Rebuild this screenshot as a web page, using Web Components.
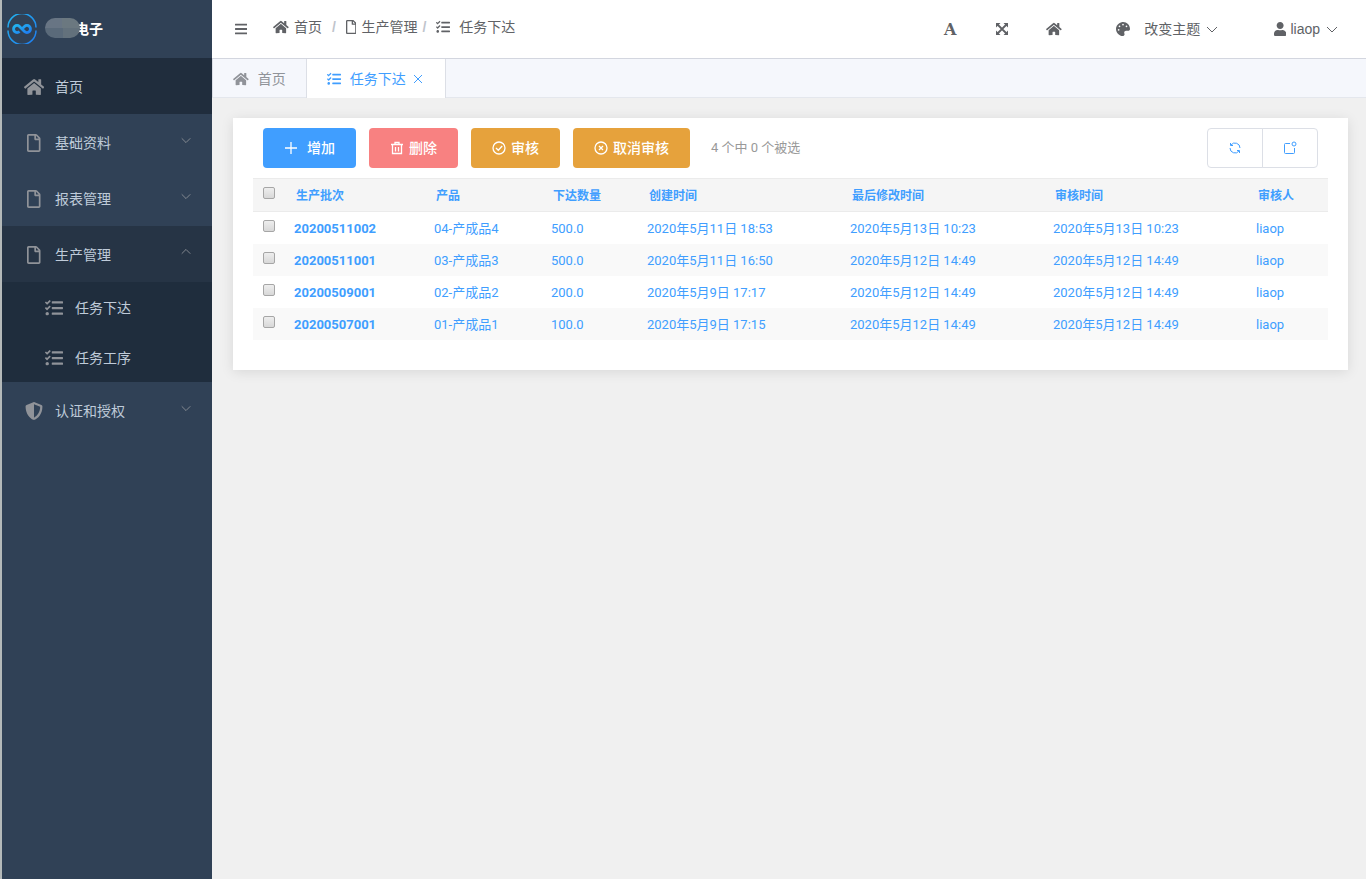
<!DOCTYPE html>
<html lang="zh-CN">
<head>
<meta charset="utf-8">
<title>任务下达</title>
<style>
    html, body {
        height: 100%;
        margin: 0;
    }

    body {
        font-family: "Liberation Sans", "Noto Sans CJK SC", sans-serif;
        font-size: 14px;
        line-height: 20px;
        color: #606266;
        background-color: #f0f0f0;
    }
</style>
</head>
<body>
<admin-app></admin-app>

<script>
// every icon: viewBox + svg content
const ICONS = {
    home: ['0 0 576 512', '<path d="M280.37 148.26L96 300.11V464a16 16 0 0 0 16 16l112.06-.29a16 16 0 0 0 15.92-16V368a16 16 0 0 1 16-16h64a16 16 0 0 1 16 16v95.64a16 16 0 0 0 16 16.05L464 480a16 16 0 0 0 16-16V300L295.67 148.26a12.19 12.19 0 0 0-15.3 0zM571.6 251.47L488 182.56V44.05a12 12 0 0 0-12-12h-56a12 12 0 0 0-12 12v72.61L318.47 43a48 48 0 0 0-61 0L4.34 251.47a12 12 0 0 0-1.6 16.9l25.5 31A12 12 0 0 0 45.15 301l235.22-193.74a12.19 12.19 0 0 1 15.3 0L530.9 301a12 12 0 0 0 16.9-1.6l25.5-31a12 12 0 0 0-1.7-16.93z"/>'],
    tasks: ['0 0 512 512', '<path d="M139.61 35.5a12 12 0 0 0-17 0L58.93 98.81l-22.7-22.12a12 12 0 0 0-17 0L3.53 92.41a12 12 0 0 0 0 17l47.59 47.4a12.78 12.78 0 0 0 17.61 0l15.59-15.62L156.52 69a12.09 12.09 0 0 0 .09-17zm0 159.19a12 12 0 0 0-17 0l-63.68 63.72-22.7-22.1a12 12 0 0 0-17 0L3.53 252a12 12 0 0 0 0 17L51 316.5a12.77 12.77 0 0 0 17.6 0l15.7-15.69 72.2-72.22a12 12 0 0 0 .09-16.9zM64 368c-26.49 0-48.59 21.5-48.59 48S37.53 464 64 464a48 48 0 0 0 0-96zm432 16H208a16 16 0 0 0-16 16v32a16 16 0 0 0 16 16h288a16 16 0 0 0 16-16v-32a16 16 0 0 0-16-16zm0-320H208a16 16 0 0 0-16 16v32a16 16 0 0 0 16 16h288a16 16 0 0 0 16-16V80a16 16 0 0 0-16-16zm0 160H208a16 16 0 0 0-16 16v32a16 16 0 0 0 16 16h288a16 16 0 0 0 16-16v-32a16 16 0 0 0-16-16z"/>'],
    file: ['0 0 384 512', '<path d="M369.9 97.9L286 14C277 5 264.8-.1 252.1-.1H48C21.5 0 0 21.5 0 48v416c0 26.5 21.5 48 48 48h288c26.5 0 48-21.5 48-48V131.9c0-12.7-5.1-25-14.1-34zM332.1 128H256V51.9l76.1 76.1zM48 464V48h160v104c0 13.3 10.7 24 24 24h104v288H48z"/>'],
    shield: ['0 0 512 512', '<path d="M466.5 83.7l-192-80a48.15 48.15 0 0 0-36.9 0l-192 80C27.7 91.1 16 108.6 16 128c0 198.5 114.5 335.7 221.5 380.3 11.8 4.9 25.1 4.9 36.9 0C360.1 472.6 496 349.3 496 128c0-19.4-11.7-36.9-29.5-44.3zM256.1 446.3l-.1-381 175.9 73.3c-3.3 151.4-82.1 261.1-175.8 307.7z"/>'],
    user: ['0 0 448 512', '<path d="M224 256c70.7 0 128-57.3 128-128S294.7 0 224 0 96 57.3 96 128s57.3 128 128 128zm89.6 32h-16.7c-22.2 10.2-46.9 16-72.9 16s-50.6-5.8-72.9-16h-16.7C60.2 288 0 348.2 0 422.4V464c0 26.5 21.5 48 48 48h352c26.5 0 48-21.5 48-48v-41.6c0-74.2-60.2-134.4-134.4-134.4z"/>'],
    palette: ['0 0 512 512', '<path d="M204.3 5C104.9 24.4 24.8 104.3 5.2 203.4c-37 187 131.7 326.4 258.8 306.7 41.2-6.4 61.4-54.6 42.5-91.7-23.1-45.4 9.9-98.4 60.9-98.4h79.7c35.8 0 64.8-29.6 64.9-65.3C511.5 97.1 368.1-26.9 204.3 5zM96 320c-17.7 0-32-14.3-32-32s14.3-32 32-32 32 14.3 32 32-14.3 32-32 32zm32-128c-17.7 0-32-14.3-32-32s14.3-32 32-32 32 14.3 32 32-14.3 32-32 32zm128-64c-17.7 0-32-14.3-32-32s14.3-32 32-32 32 14.3 32 32-14.3 32-32 32zm128 64c-17.7 0-32-14.3-32-32s14.3-32 32-32 32 14.3 32 32-14.3 32-32 32z"/>'],
    bars: ['0 0 448 512', '<path d="M16 132h416a16 16 0 0 0 16-16V76a16 16 0 0 0-16-16H16A16 16 0 0 0 0 76v40a16 16 0 0 0 16 16zm0 160h416a16 16 0 0 0 16-16v-40a16 16 0 0 0-16-16H16a16 16 0 0 0-16 16v40a16 16 0 0 0 16 16zm0 160h416a16 16 0 0 0 16-16v-40a16 16 0 0 0-16-16H16a16 16 0 0 0-16 16v40a16 16 0 0 0 16 16z"/>'],
    expand: ['0 0 14 14', '<path d="M1 1h4.500L1 5.500zM13 1v4.500L8.500 1zM1 13V8.500L5.500 13zM13 13H8.500L13 8.500z"/><path d="M2 2l10 10M12 2L2 12" fill="none" stroke="currentColor" stroke-width="1.800"/>'],
    down: ['0 0 14 14', '<path class="line" d="M2 5l5 5 5-5"/>'],
    up: ['0 0 14 14', '<path class="line" d="M2 9l5-5 5 5"/>'],
    close: ['0 0 14 14', '<path class="line" d="M3 3l8 8M11 3l-8 8"/>'],
    plus: ['0 0 14 14', '<path class="line" d="M7 1v12M1 7h12"/>'],
    trash: ['0 0 14 14', '<path class="line" d="M1 3.500h12M5 3V1.500h4V3M2.500 4v8.500h9V4M5.500 6v4.500M8.500 6v4.500"/>'],
    check: ['0 0 14 14', '<circle class="line" cx="7" cy="7" r="6"/><path class="line" d="M4 7l2.300 2.300L10.200 5"/>'],
    cancel: ['0 0 14 14', '<circle class="line" cx="7" cy="7" r="6"/><path class="line" d="M5 5l4 4M9 5l-4 4"/>'],
    refresh: ['0 0 14 14', '<path class="line" d="M12 7A5 5 0 0 0 3 4M2.500 2v2.500H5M2 7a5 5 0 0 0 9 3M11.500 12V9.500H9"/>'],
    copy: ['0 0 14 14', '<path class="line" d="M7 2.500H2.500a1 1 0 0 0-1 1v8a1 1 0 0 0 1 1h8a1 1 0 0 0 1-1V7"/><circle class="line" cx="11" cy="3" r="2"/>'],
    logo: ['0 0 30 30', `<defs><linearGradient id="g" x1="0" y1="0" x2="1" y2="1"><stop offset="0" stop-color="#22b4ee"/><stop offset="1" stop-color="#1f7cf0"/></linearGradient></defs>
        <path d="M1 13.500A14 14 0 0 1 29 13.500M1 16.500A14 14 0 0 0 29 16.500" fill="none" stroke="url(#g)" stroke-width="1.500"/>
        <path d="M12.500 17.500a3.500 3.500 0 1 1 0-5l5 5a3.500 3.500 0 1 0 0-5l-2 2" fill="none" stroke="url(#g)" stroke-width="2.800"/>`]
};

class AppIcon extends HTMLElement {
    constructor() {
        super();
        this.attachShadow({ mode: 'open' });
    }

    connectedCallback() {
        const [box, shape] = ICONS[this.getAttribute('name')];
        this.shadowRoot.innerHTML = `
        <style>
            :host { display: inline-flex; flex: none; justify-content: center; }
            svg { display: block; height: var(--icon-size, 14px); fill: currentColor; }
            .line { fill: none; stroke: currentColor; stroke-width: var(--icon-stroke, 1); }
        </style>
        <svg viewBox="${box}" aria-hidden="true">${shape}</svg>`;
    }
}
customElements.define('app-icon', AppIcon);


// One line of the side menu. Attributes: icon, arrow (up|down), level, active, open
class MenuItem extends HTMLElement {
    constructor() {
        super();
        this.attachShadow({ mode: 'open' });
    }

    connectedCallback() {
        const arrow = this.getAttribute('arrow');
        this.shadowRoot.innerHTML = `
        <style>
            :host { display: block; }
            a {
                display: flex;
                align-items: center;
                box-sizing: border-box;
                gap: 9px;
                height: 56px;
                padding: 2px 20px 0;
                color: #bfcbd9;
                text-decoration: none;
            }
            :host([active]) a { background-color: #202d3d; }
            :host([open]) a { background-color: #263445; }
            :host([level="2"]) a {
                height: 50px;
                padding-left: 40px;
                background-color: #1f2d3d;
            }
            .icon { --icon-size: 18px; width: 24px; color: #909399; }
            .arrow { --icon-size: 12px; margin-left: auto; color: #909399; padding-bottom: 6px; }
        </style>
        <a href="#">
            <app-icon class="icon" name="${this.getAttribute('icon')}"></app-icon>
            <slot></slot>
            ${arrow ? `<app-icon class="arrow" name="${arrow}"></app-icon>` : ''}
        </a>`;
    }
}
customElements.define('menu-item', MenuItem);


class SideBar extends HTMLElement {
    constructor() {
        super();
        this.attachShadow({ mode: 'open' });
        this.shadowRoot.innerHTML = `
        <style>
            :host {
                display: block;
                box-sizing: border-box;
                background-color: #304156;
                border-left: 2px solid #b4b9b9;
            }
            .logo {
                display: flex;
                align-items: center;
                height: 58px;
                padding-left: 5px;
                color: #fff;
                font-weight: bold;
            }
            .logo app-icon { --icon-size: 30px; }
            .mask {
                width: 35px;
                height: 20px;
                margin-left: 8px;
                margin-right: -5px;
                margin-bottom: 2px;
                border-radius: 10px;
                background: conic-gradient(#6b7880 25%, #63717c 0 50%, #5a6a7a 0 75%, #687584 0);
                z-index: 1;
            }
        </style>
        <div class="logo"><app-icon name="logo"></app-icon><span class="mask"></span><span>电子</span></div>
        <nav>
            <menu-item icon="home" active>首页</menu-item>
            <menu-item icon="file" arrow="down">基础资料</menu-item>
            <menu-item icon="file" arrow="down">报表管理</menu-item>
            <menu-item icon="file" arrow="up" open>生产管理</menu-item>
            <menu-item icon="tasks" level="2">任务下达</menu-item>
            <menu-item icon="tasks" level="2">任务工序</menu-item>
            <menu-item icon="shield" arrow="down">认证和授权</menu-item>
        </nav>`;
    }
}
customElements.define('side-bar', SideBar);


class TopBar extends HTMLElement {
    constructor() {
        super();
        this.attachShadow({ mode: 'open' });
        this.shadowRoot.innerHTML = `
        <style>
            :host {
                display: flex;
                align-items: center;
                height: 58px;
                padding: 0 27px 0 23px;
                background-color: #fff;
                border-bottom: 1px solid #d3d6df;
            }
            button {
                display: flex;
                align-items: center;
                justify-content: center;
                padding: 0;
                border: 0;
                background: none;
                color: inherit;
                font: inherit;
            }
            a { display: flex; align-items: center; color: inherit; text-decoration: none; gap: 5px; }
            .crumbs { display: flex; margin-left: 26px; padding-bottom: 4px; }
            .crumbs i { margin: 0 10px; color: #c0c4cc; font-style: normal; font-weight: bold; }
            .crumbs i.tight { margin-left: 5px; }
            .crumbs .wide { gap: 9px; }
            .tools { display: flex; margin-left: auto; }
            .tools .square { width: 52px; }
            .letter { font: bold 16px "DejaVu Serif", serif; }
            .theme { margin-left: 36px; }
            .theme .text { margin-left: 14px; }
            .user { margin-left: 55px; }
            .user .text { margin-left: 4px; }
            .arrow { margin-left: 5px; }
        </style>
        <button class="menu" aria-label="菜单"><app-icon name="bars"></app-icon></button>
        <nav class="crumbs">
            <a href="#"><app-icon name="home"></app-icon>首页</a><i>/</i>
            <a href="#"><app-icon name="file"></app-icon>生产管理</a><i class="tight">/</i>
            <a href="#" class="wide"><app-icon name="tasks"></app-icon>任务下达</a>
        </nav>
        <div class="tools">
            <button class="square letter">A</button>
            <button class="square" aria-label="全屏"><app-icon name="expand"></app-icon></button>
            <button class="square" aria-label="主页"><app-icon name="home"></app-icon></button>
            <button class="theme"><app-icon name="palette"></app-icon><span class="text">改变主题</span><app-icon class="arrow" name="down"></app-icon></button>
            <button class="user"><app-icon name="user"></app-icon><span class="text">liaop</span><app-icon class="arrow" name="down"></app-icon></button>
        </div>`;
    }
}
customElements.define('top-bar', TopBar);


class TabBar extends HTMLElement {
    constructor() {
        super();
        this.attachShadow({ mode: 'open' });
        this.shadowRoot.innerHTML = `
        <style>
            :host {
                display: flex;
                height: 38px;
                background-color: #f5f7fc;
                border-bottom: 1px solid #e4e7ed;
                border-left: 1px solid #dcdfe6;
            }
            .tab {
                display: flex;
                align-items: center;
                padding: 0 20px;
                height: 39px;
                box-sizing: border-box;
                color: #909399;
            }
            a { display: flex; align-items: center; gap: 9px; color: inherit; text-decoration: none; }
            .active {
                color: #409eff;
                background-color: #fff;
                border-left: 1px solid #dcdfe6;
                border-right: 1px solid #dcdfe6;
            }
            button { display: flex; margin-left: 5px; padding: 0; border: 0; background: none; color: inherit; }
        </style>
        <div class="tab"><a href="#"><app-icon name="home"></app-icon>首页</a></div>
        <div class="tab active">
            <a href="#"><app-icon name="tasks"></app-icon>任务下达</a>
            <button aria-label="关闭"><app-icon name="close"></app-icon></button>
        </div>`;
    }
}
customElements.define('tab-bar', TabBar);


// Toolbar button. Attributes: type (primary|danger|warning), icon
class ActionButton extends HTMLElement {
    constructor() {
        super();
        this.attachShadow({ mode: 'open' });
    }

    connectedCallback() {
        this.shadowRoot.innerHTML = `
        <style>
            :host { display: block; --bg: #e6a23c; --icon-stroke: 1.3; }
            :host([type="primary"]) { --bg: #409eff; --gap: 9px; }
            :host([type="danger"]) { --bg: #f88181; }
            button {
                display: flex;
                align-items: center;
                gap: var(--gap, 5px);
                height: 40px;
                padding: 0 21px;
                border: 0;
                border-radius: 4px;
                background-color: var(--bg);
                color: #fff;
                font: inherit;
                font-size: 14px;
                font-weight: 500;
            }
        </style>
        <button><app-icon name="${this.getAttribute('icon')}"></app-icon><span><slot></slot></span></button>`;
    }
}
customElements.define('action-button', ActionButton);


class ResultTable extends HTMLElement {
    constructor() {
        super();
        this.attachShadow({ mode: 'open' });
        this.widths = [33, 140, 117, 96, 203, 203, 203, 80];
        this.heads = ['生产批次', '产品', '下达数量', '创建时间', '最后修改时间', '审核时间', '审核人'];
        this.rows = [
            ['20200511002', '04-产成品4', '500.0', '2020年5月11日 18:53', '2020年5月13日 10:23', '2020年5月13日 10:23', 'liaop'],
            ['20200511001', '03-产成品3', '500.0', '2020年5月11日 16:50', '2020年5月12日 14:49', '2020年5月12日 14:49', 'liaop'],
            ['20200509001', '02-产成品2', '200.0', '2020年5月9日 17:17', '2020年5月12日 14:49', '2020年5月12日 14:49', 'liaop'],
            ['20200507001', '01-产成品1', '100.0', '2020年5月9日 17:15', '2020年5月12日 14:49', '2020年5月12日 14:49', 'liaop']
        ];
    }

    connectedCallback() {
        const cols = this.widths.map((w) => `<col style="width:${w}px">`).join('');
        const heads = this.heads.map((h) => `<th scope="col"><a href="#">${h}</a></th>`).join('');
        const rows = this.rows.map(([id, ...cells]) => `
            <tr>
                <td class="check"><input type="checkbox" aria-label="${id}"></td>
                <th scope="row"><a href="#">${id}</a></th>
                ${cells.map((c) => `<td>${c}</td>`).join('')}
            </tr>`).join('');

        this.shadowRoot.innerHTML = `
        <style>
            :host { display: block; }
            table {
                width: 100%;
                table-layout: fixed;
                border-collapse: separate;
                border-spacing: 0;
                font-family: Roboto, "Noto Sans CJK SC", sans-serif;
                font-size: 13px;
                line-height: 16px;
                color: #409eff;
            }
            th, td { padding: 9px 8px 7px; text-align: left; white-space: nowrap; }
            a { color: inherit; text-decoration: none; }
            thead th {
                padding: 9px 10px 7px;
                font-size: 12px;
                background-color: #f5f5f5;
                border-top: 1px solid #ebebeb;
                border-bottom: 1px solid #ebebeb;
            }
            tbody tr:nth-child(even) { background-color: #f9f9f9; }
            th.check, td.check { padding: 0 0 4px 10px; line-height: 0; }
            input {
                appearance: none;
                box-sizing: border-box;
                width: 12px;
                height: 12px;
                margin: 0;
                border: 1px solid #a6a6a6;
                border-radius: 2px;
                background: linear-gradient(#eee, #d8d8d8);
            }
        </style>
        <table>
            <colgroup>${cols}</colgroup>
            <thead><tr><th class="check"><input type="checkbox" aria-label="全选"></th>${heads}</tr></thead>
            <tbody>${rows}</tbody>
        </table>`;
    }
}
customElements.define('result-table', ResultTable);


class ListPage extends HTMLElement {
    constructor() {
        super();
        this.attachShadow({ mode: 'open' });
        this.shadowRoot.innerHTML = `
        <style>
            :host {
                display: block;
                margin: 20px 18px 0 21px;
                padding: 10px 20px 30px;
                background-color: #fff;
                box-shadow: 0 2px 12px rgba(0, 0, 0, .1);
            }
            .bar { display: flex; align-items: center; gap: 13px; margin: 0 10px 10px; }
            .count {
                margin-left: 8px;
                font-family: Roboto, "Noto Sans CJK SC", sans-serif;
                font-size: 13px;
                line-height: 20px;
                color: #999;
            }
            .group { display: flex; margin-left: auto; }
            .group button {
                display: flex;
                align-items: center;
                justify-content: center;
                width: 56px;
                height: 40px;
                padding: 0;
                border: 1px solid #dcdfe6;
                border-radius: 4px 0 0 4px;
                background: none;
                color: #409eff;
            }
            .group button + button { margin-left: -1px; border-radius: 0 4px 4px 0; }
        </style>
        <div class="bar">
            <action-button type="primary" icon="plus">增加</action-button>
            <action-button type="danger" icon="trash">删除</action-button>
            <action-button type="warning" icon="check">审核</action-button>
            <action-button type="warning" icon="cancel">取消审核</action-button>
            <span class="count">4 个中 0 个被选</span>
            <div class="group">
                <button aria-label="刷新"><app-icon name="refresh"></app-icon></button>
                <button aria-label="新窗口"><app-icon name="copy"></app-icon></button>
            </div>
        </div>
        <result-table></result-table>`;
    }
}
customElements.define('list-page', ListPage);


class AdminApp extends HTMLElement {
    constructor() {
        super();
        this.attachShadow({ mode: 'open' });
        this.shadowRoot.innerHTML = `
        <style>
            :host {
                display: grid;
                grid-template-columns: 212px minmax(0, 1fr);
                min-height: 100%;
            }
        </style>
        <side-bar></side-bar>
        <main>
            <top-bar></top-bar>
            <tab-bar></tab-bar>
            <list-page></list-page>
        </main>`;
    }
}
customElements.define('admin-app', AdminApp);
</script>
</body>
</html>
